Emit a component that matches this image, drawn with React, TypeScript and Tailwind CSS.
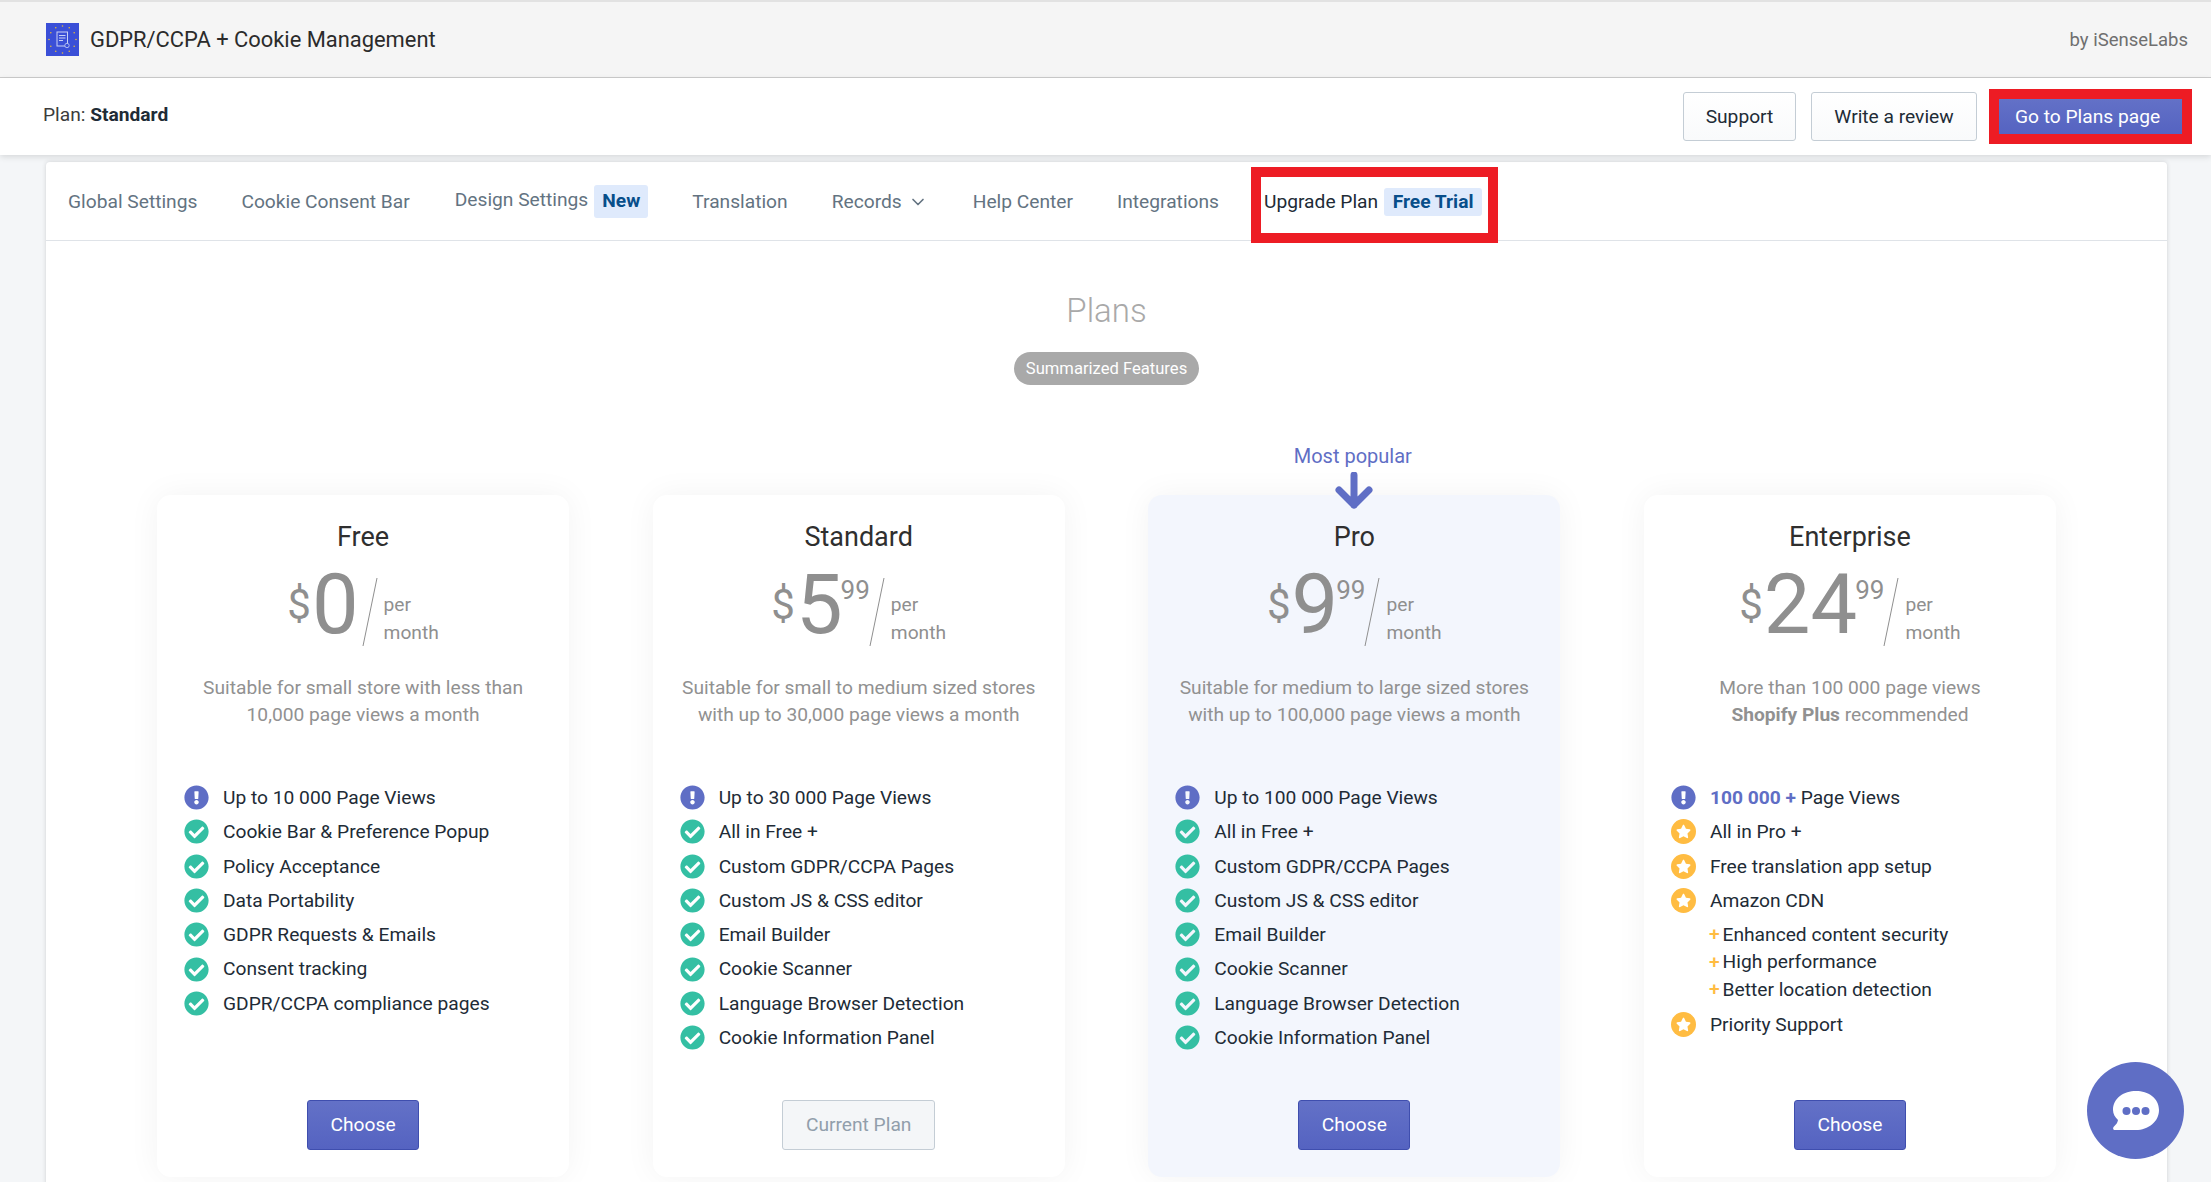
import { FaCheckCircle, FaExclamationCircle, FaStar } from "react-icons/fa";
import { ChevronDown } from "lucide-react";

type Item = { t: React.ReactNode; k: "info" | "check" | "star" | "sub"; h?: string };

const Icon = ({ k }: { k: string }) => {
  if (k === "info") return <FaExclamationCircle className="text-[25px] text-[#5f6ec5] shrink-0" />;
  if (k === "check") return <FaCheckCircle className="text-[25px] text-[#34bfa3] shrink-0" />;
  return (
    <span className="w-[25px] h-[25px] rounded-full bg-[#ffbc42] flex items-center justify-center shrink-0">
      <FaStar className="text-[15px] text-white" />
    </span>
  );
};

const Row = ({ item }: { item: Item }) =>
  item.k === "sub" ? (
    <li className={`flex items-center pl-[38px] text-[19.2px] text-[#212b36] h-[27.5px] ${item.h ?? ""}`}>
      <span className="text-[#ffbc42] font-medium mr-[3px]">+</span>
      <span className="pt-[1.5px]">{item.t}</span>
    </li>
  ) : (
    <li className={`flex items-center gap-[14px] text-[19.2px] text-[#212b36] h-[34.3px] ${item.h ?? ""}`}>
      <Icon k={item.k} />
      <span className="pt-[1.5px]">{item.t}</span>
    </li>
  );

const Slash = () => (
  <svg width="16" height="70" viewBox="0 0 16 70" className="mt-[12px] mx-[3px] shrink-0">
    <line x1="15" y1="1" x2="1" y2="69" stroke="#8f8f8f" strokeWidth="1" />
  </svg>
);

type Plan = {
  name: string;
  whole: string;
  cents?: string;
  desc: React.ReactNode;
  items: Item[];
  pro?: boolean;
  current?: boolean;
};

const base: Item[] = [
  { t: "All in Free +", k: "check" },
  { t: "Custom GDPR/CCPA Pages", k: "check" },
  { t: "Custom JS & CSS editor", k: "check" },
  { t: "Email Builder", k: "check" },
  { t: "Cookie Scanner", k: "check" },
  { t: "Language Browser Detection", k: "check" },
  { t: "Cookie Information Panel", k: "check" },
];

const plans: Plan[] = [
  {
    name: "Free",
    whole: "0",
    desc: (
      <>
        Suitable for small store with less than
        <br />
        10,000 page views a month
      </>
    ),
    items: [
      { t: "Up to 10 000 Page Views", k: "info" },
      { t: "Cookie Bar & Preference Popup", k: "check" },
      { t: "Policy Acceptance", k: "check" },
      { t: "Data Portability", k: "check" },
      { t: "GDPR Requests & Emails", k: "check" },
      { t: "Consent tracking", k: "check" },
      { t: "GDPR/CCPA compliance pages", k: "check" },
    ],
  },
  {
    name: "Standard",
    whole: "5",
    cents: "99",
    current: true,
    desc: (
      <>
        Suitable for small to medium sized stores
        <br />
        with up to 30,000 page views a month
      </>
    ),
    items: [{ t: "Up to 30 000 Page Views", k: "info" }, ...base],
  },
  {
    name: "Pro",
    whole: "9",
    cents: "99",
    pro: true,
    desc: (
      <>
        Suitable for medium to large sized stores
        <br />
        with up to 100,000 page views a month
      </>
    ),
    items: [{ t: "Up to 100 000 Page Views", k: "info" }, ...base],
  },
  {
    name: "Enterprise",
    whole: "24",
    cents: "99",
    desc: (
      <>
        More than 100 000 page views
        <br />
        <b className="font-bold">Shopify Plus</b> recommended
      </>
    ),
    items: [
      {
        t: (
          <>
            <b className="font-bold text-[#5f6ec5]">100 000 +</b> Page Views
          </>
        ),
        k: "info",
      },
      { t: "All in Pro +", k: "star" },
      { t: "Free translation app setup", k: "star" },
      { t: "Amazon CDN", k: "star" },
      { t: "Enhanced content security", k: "sub", h: "mt-[3px]" },
      { t: "High performance", k: "sub" },
      { t: "Better location detection", k: "sub" },
      { t: "Priority Support", k: "star", h: "mt-[4px]" },
    ],
  },
];

const Card = ({ p }: { p: Plan }) => (
  <div
    className={`relative h-[682px] rounded-[14px] flex flex-col shadow-[0_0_32px_rgba(0,0,0,0.05)] px-[27px] pb-[27px] pt-[22px] ${
      p.pro ? "bg-[#f3f6fd]" : "bg-white"
    }`}
  >
    {p.pro && (
      <div className="absolute -top-[52px] left-0 right-0 flex flex-col items-center">
        <span className="text-[20px] leading-[24px] text-[#5f6ec5] mt-[1px] -ml-[3px]">Most popular</span>
        <svg width="38" height="38" viewBox="0 0 38 38" className="mt-[4px]">
          <path d="M19 3V33M4 18L19 33L34 18" fill="none" stroke="#5f6ec5" strokeWidth="7" strokeLinecap="round" strokeLinejoin="round" />
        </svg>
      </div>
    )}
    <h3 className="text-[27px] leading-[40px] text-center text-[#2f2f2f] font-normal">{p.name}</h3>
    <div className="flex justify-center h-[80px] mt-[8px] text-[#8f8f8f]">
      <span className="text-[42px] leading-[80px] mr-[1px] font-normal">$</span>
      <span className="text-[83px] leading-[80px] font-normal">{p.whole}</span>
      {p.cents && <span className="text-[26px] leading-[26px] mt-[12px] -ml-[2px] -mr-[4px] font-normal">{p.cents}</span>}
      <Slash />
      <div className="text-[19.2px] leading-[27.5px] mt-[26px] ml-[3px] font-normal">
        <div>per</div>
        <div>month</div>
      </div>
    </div>
    <p className="mt-[29px] text-[19.2px] leading-[27px] text-center text-[#919191] whitespace-nowrap">{p.desc}</p>
    <ul className="mt-[52.5px] flex flex-col">
      {p.items.map((it, i) => (
        <Row key={i} item={it} />
      ))}
    </ul>
    <div className="mt-auto flex justify-center">
      {p.current ? (
        <button className="w-[153px] h-[50px] rounded-[3px] border border-[#c4cdd5] bg-[#f4f6f8] text-[#919eab] text-[19.2px] leading-[46px] pb-[1px]">
          Current Plan
        </button>
      ) : (
        <button className="w-[112px] h-[50px] rounded-[3px] border border-[#3f4eae] bg-gradient-to-b from-[#6371c7] to-[#5563c1] text-white text-[19.2px] leading-[46px] pb-[1px]">
          Choose
        </button>
      )}
    </div>
  </div>
);

const NavLink = ({ children, cls }: { children: React.ReactNode; cls?: string }) => (
  <a className={`text-[19.2px] text-[#637381] whitespace-nowrap pt-[2px] ${cls ?? ""}`}>{children}</a>
);

const Logo = () => (
  <svg width="33" height="33" viewBox="0 0 33 33" className="shrink-0">
    <rect width="33" height="33" fill="#3a4fd7" />
    {[0, 30, 60, 90, 120, 150, 180, 210, 240, 270, 300, 330].map((a) => (
      <circle
        key={a}
        cx={16.5 + 13.5 * Math.cos((a * Math.PI) / 180)}
        cy={16.5 + 13.5 * Math.sin((a * Math.PI) / 180)}
        r="0.8"
        fill="#e3b93a"
      />
    ))}
    <rect x="11" y="9" width="10.5" height="14" fill="none" stroke="#c9d2f5" strokeWidth="1" />
    <path d="M13 12.5H19.5M13 15H19.5M13 17.5H17" stroke="#c9d2f5" strokeWidth="1" />
    <circle cx="21" cy="22.5" r="2.2" fill="#3a4fd7" stroke="#c9d2f5" strokeWidth="0.8" />
  </svg>
);

export default function App() {
  return (
    <div className="h-[1182px] overflow-hidden bg-[#f4f6f8] font-['Roboto',sans-serif] relative">
      <header className="h-[78px] bg-[#f5f5f5] border-b border-[#cccccc] border-t-2 border-t-[#e2e2e2] flex items-center pl-[46px] pr-[23px]">
        <Logo />
        <span className="ml-[11px] pt-[2px] text-[21.9px] text-[#2b2b2b]">GDPR/CCPA + Cookie Management</span>
        <span className="ml-auto pt-[2px] text-[18.5px] text-[#6f6f6f]">by iSenseLabs</span>
      </header>
      <div className="h-[77px] bg-white shadow-[0_2px_6px_rgba(0,0,0,0.12)] flex items-center pl-[43px] pr-[19px] relative">
        <span className="text-[19.2px] text-[#3c3c3c] -mt-[2px]">
          Plan: <b className="font-bold text-[#212b36]">Standard</b>
        </span>
        <div className="ml-auto flex items-center">
          <button className="w-[113px] h-[49px] rounded-[3px] border border-[#c4cdd5] bg-gradient-to-b from-white to-[#f9fafb] text-[19.2px] text-[#212b36] pt-[2px]">
            Support
          </button>
          <button className="ml-[15px] w-[166px] h-[49px] rounded-[3px] border border-[#c4cdd5] bg-gradient-to-b from-white to-[#f9fafb] text-[19.2px] text-[#212b36] pt-[2px]">
            Write a review
          </button>
          <div className="ml-[12px] border-[10px] border-[#ed1c24]">
            <button className="block w-[183px] h-[35px] bg-gradient-to-b from-[#6371c7] to-[#5563c1] text-white text-[19.2px] pr-[6px] pt-[1px]">
              Go to Plans page
            </button>
          </div>
        </div>
      </div>
      <main className="ml-[46px] mr-[44px] mt-[7px] bg-white rounded-t-[4px] shadow-[0_0_4px_rgba(63,63,68,0.2)] h-[1100px]">
        <nav className="h-[79px] border-b border-[#dfe3e8] flex items-center pl-[22px]">
          <NavLink>Global Settings</NavLink>
          <NavLink cls="ml-[44px]">Cookie Consent Bar</NavLink>
          <NavLink cls="ml-[45px] -mt-[3px]">Design Settings</NavLink>
          <span className="ml-[6px] w-[54px] h-[33px] rounded-[3px] bg-[#dfeafc] text-[#084e8a] text-[19.2px] font-bold flex items-center justify-center pt-[1px]">
            New
          </span>
          <NavLink cls="ml-[44px]">Translation</NavLink>
          <NavLink cls="ml-[44px] flex items-center">
            Records
            <ChevronDown className="w-[20px] h-[20px] ml-[6px] -mr-[1px]" strokeWidth={2} />
          </NavLink>
          <NavLink cls="ml-[46px]">Help Center</NavLink>
          <NavLink cls="ml-[44px]">Integrations</NavLink>
          <div className="ml-[32px] w-[247px] h-[76px] self-start mt-[5px] border-[10px] border-[#ed1c24] flex items-center pl-[3px] pb-[6px]">
            <span className="text-[19.2px] text-[#212b36] whitespace-nowrap">Upgrade Plan</span>
            <span className="ml-[6px] w-[98px] h-[28px] rounded-[3px] bg-[#dfeafc] text-[#084e8a] text-[19.2px] font-bold flex items-center justify-center whitespace-nowrap">
              Free Trial
            </span>
          </div>
        </nav>
        <div className="flex flex-col items-center pt-[48px]">
          <h1 className="text-[33px] leading-[44px] font-light text-[#a9a9a9]">Plans</h1>
          <span className="mt-[19px] w-[185px] h-[33px] rounded-full bg-[#a9a9a9] text-white text-[16.6px] pt-[1px] flex items-center justify-center whitespace-nowrap">
            Summarized Features
          </span>
        </div>
        <section className="mt-[110px] pl-[111px] pr-[111px] grid grid-cols-4 gap-[83.5px]">
          {plans.map((p) => (
            <Card key={p.name} p={p} />
          ))}
        </section>
      </main>
      <div className="absolute left-[2087px] top-[1062px] w-[97px] h-[97px] rounded-full bg-[#5f6ec5] flex items-center justify-center">
        <svg width="48" height="42" viewBox="0 0 48 42">
          <path d="M24 1C36 1 47 8 47 20C47 32 36 40 24 40H3C1 40 0.5 38 2 36.5C4 34.5 5.5 33 6 30C3 27 1 24 1 20C1 8 12 1 24 1Z" fill="white" />
          <circle cx="14.5" cy="21" r="4" fill="#5f6ec5" />
          <circle cx="24" cy="21" r="4" fill="#5f6ec5" />
          <circle cx="33.5" cy="21" r="4" fill="#5f6ec5" />
        </svg>
      </div>
    </div>
  );
}
